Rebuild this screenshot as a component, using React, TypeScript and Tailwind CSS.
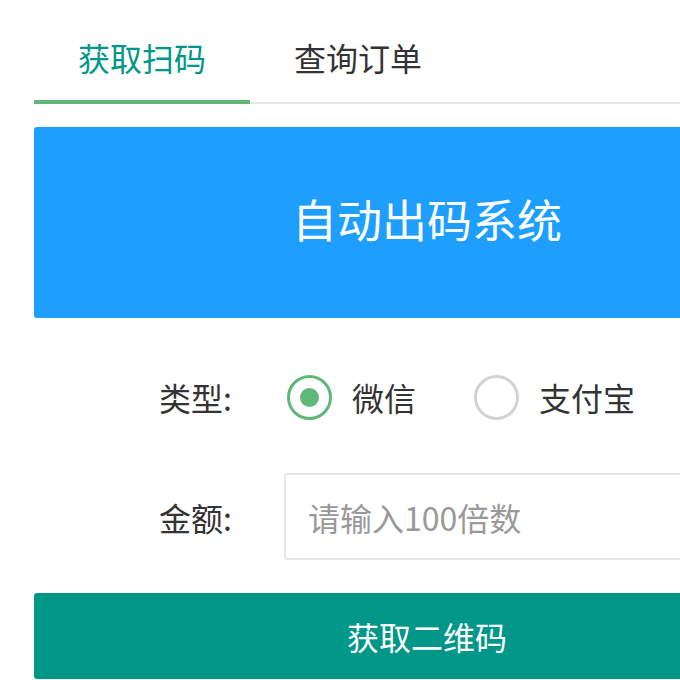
export default function App() {
  return (
    <main
      className="w-[680px] h-[680px] overflow-hidden bg-white pt-[14px]"
      style={{ fontFamily: '"Noto Sans CJK SC", "Noto Sans", sans-serif' }}
    >
      <div className="ml-[34px] w-[786px]">
        {/* tabs */}
        <div className="flex border-b-2 border-[#e6e6e6]">
          <div className="w-[216px] h-[90px] -mb-[2px] flex items-center justify-center border-b-4 border-[#5FB878] text-[32px] text-[#009688]">
            获取扫码
          </div>
          <div className="w-[216px] h-[90px] -mb-[2px] flex items-center justify-center border-b-4 border-transparent text-[32px] text-[#333]">
            查询订单
          </div>
        </div>

        {/* banner */}
        <div className="mt-[23px] h-[191px] pb-[8px] rounded-[3px] bg-[#1E9FFF] flex items-center justify-center">
          <span className="text-[45px] text-white leading-none">自动出码系统</span>
        </div>

        {/* type */}
        <div className="mt-[35px] h-[88px] flex items-center">
          <div className="w-[250px] pr-[52px] text-right text-[32px] text-[#333]">类型:</div>
          <div className="ml-[3px] w-[45px] h-[45px] rounded-full border-[3px] border-[#5FB878] flex items-center justify-center">
            <div className="w-[19px] h-[19px] rounded-full bg-[#5FB878]" />
          </div>
          <span className="ml-[20px] text-[32px] text-[#333]">微信</span>
          <div className="ml-[58px] w-[45px] h-[45px] rounded-full border-[3px] border-[#d2d2d2]" />
          <span className="ml-[20px] text-[32px] text-[#333]">支付宝</span>
        </div>

        {/* amount */}
        <div className="mt-[32px] flex items-center">
          <div className="w-[250px] pr-[52px] text-right text-[32px] text-[#333]">金额:</div>
          <input
            className="flex-1 h-[87px] rounded-[3px] border-2 border-[#e6e6e6] pl-[22px] text-[32px] text-[#333] placeholder:text-[#999] outline-none"
            placeholder="请输入100倍数"
          />
        </div>

        {/* submit */}
        <button className="mt-[33px] w-full h-[86px] rounded-[3px] bg-[#009688] text-white text-[32px]">
          获取二维码
        </button>
      </div>
    </main>
  );
}
